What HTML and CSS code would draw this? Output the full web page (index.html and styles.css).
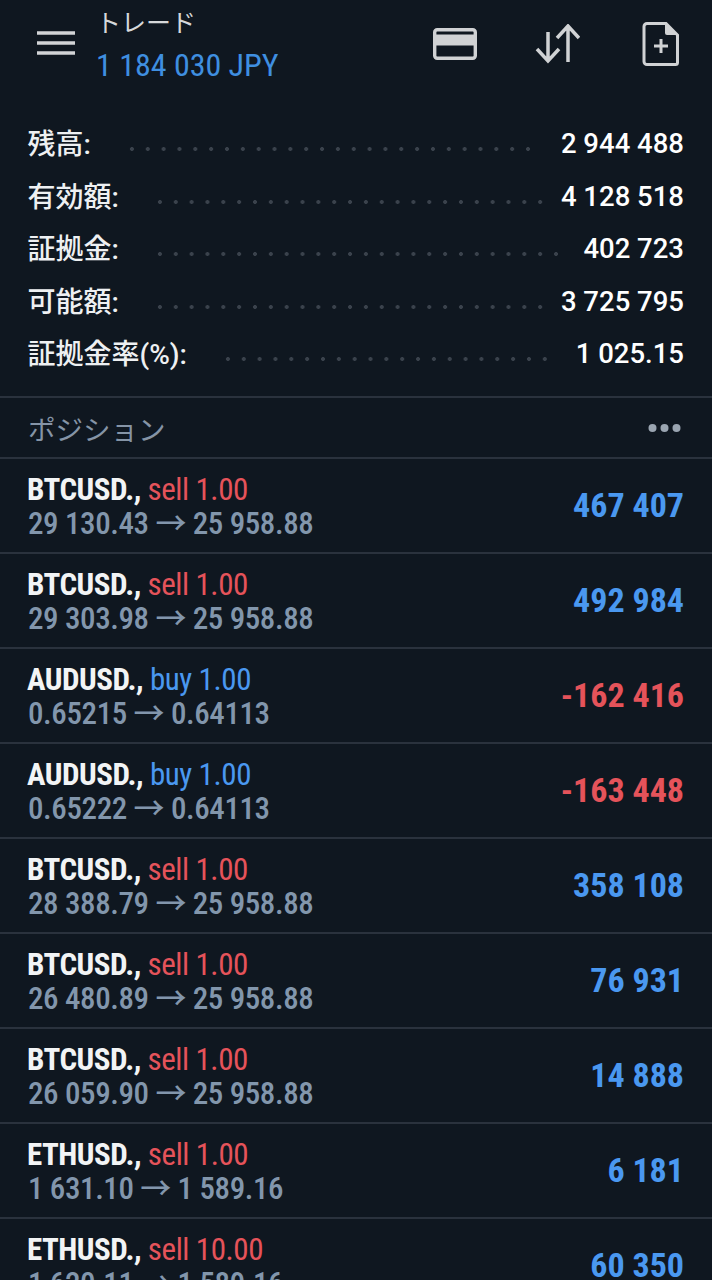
FILE: index.html
```html
<!DOCTYPE html>
<html lang="ja">
<head>
<meta charset="utf-8">
<title>トレード</title>
<link rel="stylesheet" href="styles.css">
</head>
<body>
<div class="app">
  <header class="top">
    <svg class="menu" width="38" height="28" viewBox="0 0 38 28"><path d="M0 4h38M0 14h38M0 24h38" stroke="#d2d4d6" stroke-width="3.4"/></svg>
    <div class="title">
      <div class="title-name">トレード</div>
      <div class="title-val">1 184 030 JPY</div>
    </div>
    <div class="actions">
      <svg class="ic-card" width="46" height="34" viewBox="0 0 46 34" fill="none"><rect x="2.700" y="2.700" width="40.600" height="28.600" rx="2.500" stroke="#d0d2d4" stroke-width="3.400"/><rect x="3" y="7.500" width="40" height="11" fill="#d0d2d4"/></svg>
      <svg class="ic-swap" width="46" height="40" viewBox="0 0 46 40" fill="none" stroke="#d0d2d4" stroke-width="3.500"><path d="M14 8v29M3 25l11 12 11-12M34 38V3M23 14L34 2l11 12"/></svg>
      <svg class="ic-file" width="38" height="46" viewBox="0 0 38 46" fill="none"><path d="M5 2.500h19l11.500 11.500v27.500a2 2 0 0 1-2 2H5a3 3 0 0 1-3-3V5.500a3 3 0 0 1 3-3z" stroke="#d0d2d4" stroke-width="3"/><path d="M23 2l13 12H25a2 2 0 0 1-2-2z" fill="#d0d2d4"/><path d="M19 18v14M12 25h14" stroke="#d0d2d4" stroke-width="3"/></svg>
    </div>
  </header>
  <section class="summary">
    <div class="s-row"><span class="s-label">残高:</span><i class="dots"></i><span class="s-val">2 944 488</span></div>
    <div class="s-row"><span class="s-label">有効額:</span><i class="dots"></i><span class="s-val">4 128 518</span></div>
    <div class="s-row"><span class="s-label">証拠金:</span><i class="dots"></i><span class="s-val">402 723</span></div>
    <div class="s-row"><span class="s-label">可能額:</span><i class="dots"></i><span class="s-val">3 725 795</span></div>
    <div class="s-row"><span class="s-label">証拠金率(%):</span><i class="dots"></i><span class="s-val">1 025.15</span></div>
  </section>
  <div class="sec-head"><span>ポジション</span><svg width="34" height="10" viewBox="0 0 34 10"><g fill="#9aa5b1"><circle cx="4.500" cy="5" r="4"/><circle cx="16.500" cy="5" r="4"/><circle cx="28.500" cy="5" r="4"/></g></svg></div>
  <div class="pos"><div class="p-left"><div class="p-l1"><b>BTCUSD.,</b> <span class="red">sell 1.00</span></div><div class="p-l2">29 130.43 → 25 958.88</div></div><div class="p-val blue">467 407</div></div>
  <div class="pos"><div class="p-left"><div class="p-l1"><b>BTCUSD.,</b> <span class="red">sell 1.00</span></div><div class="p-l2">29 303.98 → 25 958.88</div></div><div class="p-val blue">492 984</div></div>
  <div class="pos"><div class="p-left"><div class="p-l1"><b>AUDUSD.,</b> <span class="blue">buy 1.00</span></div><div class="p-l2">0.65215 → 0.64113</div></div><div class="p-val red">-162 416</div></div>
  <div class="pos"><div class="p-left"><div class="p-l1"><b>AUDUSD.,</b> <span class="blue">buy 1.00</span></div><div class="p-l2">0.65222 → 0.64113</div></div><div class="p-val red">-163 448</div></div>
  <div class="pos"><div class="p-left"><div class="p-l1"><b>BTCUSD.,</b> <span class="red">sell 1.00</span></div><div class="p-l2">28 388.79 → 25 958.88</div></div><div class="p-val blue">358 108</div></div>
  <div class="pos"><div class="p-left"><div class="p-l1"><b>BTCUSD.,</b> <span class="red">sell 1.00</span></div><div class="p-l2">26 480.89 → 25 958.88</div></div><div class="p-val blue">76 931</div></div>
  <div class="pos"><div class="p-left"><div class="p-l1"><b>BTCUSD.,</b> <span class="red">sell 1.00</span></div><div class="p-l2">26 059.90 → 25 958.88</div></div><div class="p-val blue">14 888</div></div>
  <div class="pos"><div class="p-left"><div class="p-l1"><b>ETHUSD.,</b> <span class="red">sell 1.00</span></div><div class="p-l2">1 631.10 → 1 589.16</div></div><div class="p-val blue">6 181</div></div>
  <div class="pos"><div class="p-left"><div class="p-l1"><b>ETHUSD.,</b> <span class="red">sell 10.00</span></div><div class="p-l2">1 620.11 → 1 589.16</div></div><div class="p-val blue">60 350</div></div>
</div>
</body>
</html>
```
FILE: styles.css
```css
* { box-sizing: border-box; }
html, body { margin: 0; height: 1280px; overflow: hidden; background: #0f1720; }
body { font-family: Roboto, "Noto Sans CJK JP", sans-serif; color: #fff; }
.app { width: 712px; height: 1280px; overflow: hidden; }
.top { height: 118px; display: flex; align-items: flex-start; padding: 0 32px 0 37px; }
.menu { margin-top: 29px; width: 38px; flex: none; }
.title { margin-left: 21px; }
.title-name { font-size: 25px; line-height: 28px; margin-top: 10px; color: #d6d8da; }
.title-val { font-size: 32px; line-height: 38px; margin-top: 8px; color: #3f8fe0; font-stretch: 75%; }
.actions { margin-left: auto; display: flex; align-items: flex-start; gap: 56px; }
.ic-card { margin-top: 27px; }
.ic-swap { margin-top: 24px; }
.ic-file { margin-top: 21px; margin-left: 6px; }
.summary { height: 280px; padding: 0 28px; border-bottom: 2px solid #2a323d; }
.s-row { height: 52.500px; display: flex; align-items: center; font-size: 28px; font-weight: 500; }
.s-label { color: #eef0f2; margin-bottom: 4px; margin-left: -0.500px; }
.s-val { font-size: 27.500px; margin-bottom: 1px; }
.dots { flex: 1; height: 4px; margin: 10px 24px 0 33px; background: radial-gradient(circle, #3a424c 1.800px, transparent 2.200px) 0 0 / 15.850px 4px repeat-x; }
.s-row:nth-child(2) .dots, .s-row:nth-child(4) .dots { margin-right: 13px; }
.s-row:nth-child(3) .dots { margin-right: 20px; }
.sec-head { height: 61px; display: flex; align-items: center; justify-content: space-between; padding: 0 30px 0 28px; font-size: 27.500px; color: #8594a6; border-bottom: 2px solid #2a323d; }
.pos { height: 95px; display: flex; align-items: center; justify-content: space-between; padding: 0 28px; border-bottom: 2px solid #2a323d; }
.p-left { margin-top: 2px; margin-left: -1px; }
.p-l1 { font-size: 31px; line-height: 34px; font-stretch: 75%; letter-spacing: -0.4px; color: #f2f4f5; white-space: nowrap; }
.p-l1 b { font-weight: 700; letter-spacing: -0.5px; }
.p-l2 { font-size: 31px; line-height: 34px; font-stretch: 75%; letter-spacing: -0.4px; font-weight: 500; color: #8296ac; white-space: nowrap; margin-left: 1px; }
.p-val { font-size: 34px; font-weight: 700; font-stretch: 75%; margin-bottom: 1px; }
.red { color: #e5535a; }
.blue { color: #4a98f0; }
```
